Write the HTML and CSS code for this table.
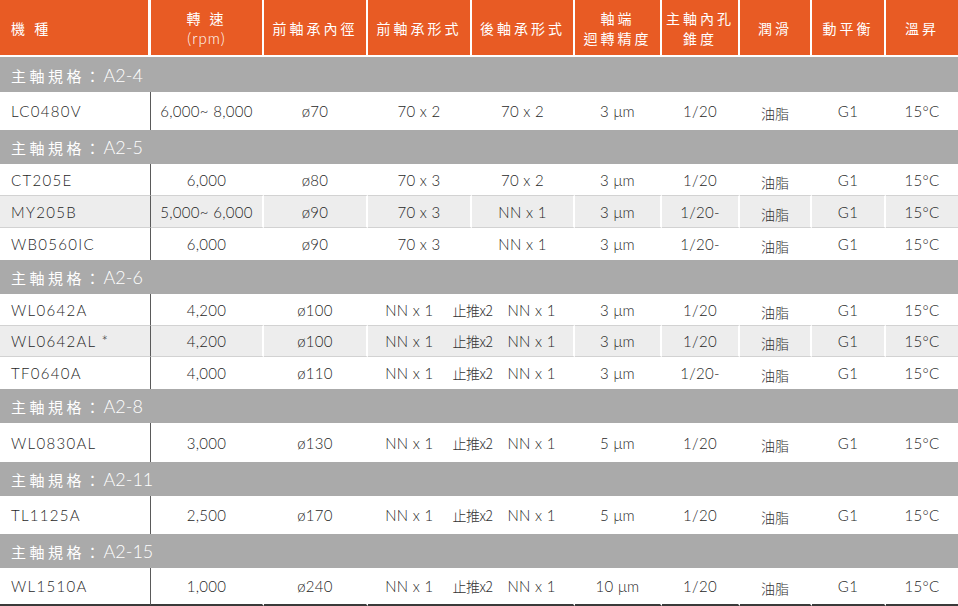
FILE: index.html
```html
<!DOCTYPE html>
<html lang="zh-Hant">
<head>
<meta charset="utf-8">
<title>主軸規格</title>
<link rel="stylesheet" href="styles.css">
</head>
<body>
<table class="spec">
  <colgroup>
    <col class="c1"><col class="c2"><col class="c3"><col class="c4"><col class="c5">
    <col class="c6"><col class="c7"><col class="c8"><col class="c9"><col class="c10">
  </colgroup>
  <thead>
    <tr>
      <th class="model">機 種</th>
      <th>轉 速<br><span class="rpm">(rpm)</span></th>
      <th>前軸承內徑</th>
      <th>前軸承形式</th>
      <th>後軸承形式</th>
      <th>軸端<br>迴轉精度</th>
      <th>主軸內孔<br>錐度</th>
      <th>潤滑</th>
      <th>動平衡</th>
      <th class="last">溫昇</th>
    </tr>
  </thead>
  <tbody>
    <tr class="grp first"><td colspan="10">主軸規格：<span class="code">A2-4</span></td></tr>
    <tr class="h38 end">
      <td class="model">LC0480V</td><td>6,000~ 8,000</td><td>ø70</td><td>70 x 2</td><td>70 x 2</td>
      <td>3 μm</td><td>1/20</td><td class="cjk">油脂</td><td>G1</td><td>15°C</td>
    </tr>

    <tr class="grp"><td colspan="10">主軸規格：<span class="code">A2-5</span></td></tr>
    <tr class="h32">
      <td class="model">CT205E</td><td>6,000</td><td>ø80</td><td>70 x 3</td><td>70 x 2</td>
      <td>3 μm</td><td>1/20</td><td class="cjk">油脂</td><td>G1</td><td>15°C</td>
    </tr>
    <tr class="h32 alt">
      <td class="model">MY205B</td><td>5,000~ 6,000</td><td>ø90</td><td>70 x 3</td><td>NN x 1</td>
      <td>3 μm</td><td>1/20-</td><td class="cjk">油脂</td><td>G1</td><td>15°C</td>
    </tr>
    <tr class="h32 end">
      <td class="model">WB0560IC</td><td>6,000</td><td>ø90</td><td>70 x 3</td><td>NN x 1</td>
      <td>3 μm</td><td>1/20-</td><td class="cjk">油脂</td><td>G1</td><td>15°C</td>
    </tr>

    <tr class="grp"><td colspan="10">主軸規格：<span class="code">A2-6</span></td></tr>
    <tr class="h32">
      <td class="model">WL0642A</td><td>4,200</td><td>ø100</td>
      <td colspan="2" class="split"><span>NN x 1</span><span class="thrust">止推x2</span><span>NN x 1</span></td>
      <td>3 μm</td><td>1/20</td><td class="cjk">油脂</td><td>G1</td><td>15°C</td>
    </tr>
    <tr class="h31 alt">
      <td class="model">WL0642AL *</td><td>4,200</td><td>ø100</td>
      <td colspan="2" class="split"><span>NN x 1</span><span class="thrust">止推x2</span><span>NN x 1</span></td>
      <td>3 μm</td><td>1/20</td><td class="cjk">油脂</td><td>G1</td><td>15°C</td>
    </tr>
    <tr class="h32 end">
      <td class="model">TF0640A</td><td>4,000</td><td>ø110</td>
      <td colspan="2" class="split"><span>NN x 1</span><span class="thrust">止推x2</span><span>NN x 1</span></td>
      <td>3 μm</td><td>1/20-</td><td class="cjk">油脂</td><td>G1</td><td>15°C</td>
    </tr>

    <tr class="grp"><td colspan="10">主軸規格：<span class="code">A2-8</span></td></tr>
    <tr class="h39 end">
      <td class="model">WL0830AL</td><td>3,000</td><td>ø130</td>
      <td colspan="2" class="split"><span>NN x 1</span><span class="thrust">止推x2</span><span>NN x 1</span></td>
      <td>5 μm</td><td>1/20</td><td class="cjk">油脂</td><td>G1</td><td>15°C</td>
    </tr>

    <tr class="grp"><td colspan="10">主軸規格：<span class="code">A2-11</span></td></tr>
    <tr class="h38 end">
      <td class="model">TL1125A</td><td>2,500</td><td>ø170</td>
      <td colspan="2" class="split"><span>NN x 1</span><span class="thrust">止推x2</span><span>NN x 1</span></td>
      <td>5 μm</td><td>1/20</td><td class="cjk">油脂</td><td>G1</td><td>15°C</td>
    </tr>

    <tr class="grp"><td colspan="10">主軸規格：<span class="code">A2-15</span></td></tr>
    <tr class="h38 end final">
      <td class="model">WL1510A</td><td>1,000</td><td>ø240</td>
      <td colspan="2" class="split"><span>NN x 1</span><span class="thrust">止推x2</span><span>NN x 1</span></td>
      <td>10 μm</td><td>1/20</td><td class="cjk">油脂</td><td>G1</td><td>15°C</td>
    </tr>
  </tbody>
</table>
</body>
</html>
```

FILE: styles.css
```css
html, body {
  margin: 0;
  padding: 0;
  background: #ffffff;
}

.spec {
  width: 958px;
  table-layout: fixed;
  border-collapse: separate;
  border-spacing: 0;
  font-family: "Lato", "Noto Sans CJK TC", sans-serif;
  font-weight: 300;
  font-size: 15px;
  color: #1f1f1f;
}

.c1 { width: 151px; }
.c2 { width: 113px; }
.c3 { width: 104px; }
.c4 { width: 104px; }
.c5 { width: 103px; }
.c6 { width: 87px; }
.c7 { width: 78px; }
.c8 { width: 72px; }
.c9 { width: 74px; }
.c10 { width: 72px; }

.spec th {
  height: 55px;
  padding: 0;
  background: #e85b24;
  color: #ffffff;
  font-family: "Noto Sans CJK TC", sans-serif;
  font-weight: normal;
  font-size: 14px;
  line-height: 20px;
  letter-spacing: 3px;
  text-align: center;
  vertical-align: middle;
  border-right: 2px solid #ffffff;
  border-bottom: 2px solid #ffffff;
}

.spec th.model {
  text-align: left;
  padding-left: 11px;
  border-right-width: 3px;
}

.spec th.last {
  border-right: 0;
}

.rpm {
  font-family: "Lato", sans-serif;
  font-weight: 300;
  font-size: 15px;
  letter-spacing: 1px;
}

.spec td {
  padding: 0;
  text-align: center;
  vertical-align: middle;
  white-space: nowrap;
  border-right: 2px solid #ffffff;
  letter-spacing: 0.3px;
}

.spec td:last-child {
  border-right: 0;
}

.spec td.model {
  text-align: left;
  padding-left: 11px;
  letter-spacing: 1.3px;
  border-right: 1px solid #5a5a5a;
}

.spec td.cjk {
  font-family: "Noto Sans CJK TC", sans-serif;
  font-weight: 300;
  font-size: 14px;
  padding-top: 4px;
  letter-spacing: 0;
  color: #333333;
}

.split span {
  display: inline-block;
}

.split .thrust {
  margin: 0 15px 0 19px;
  font-family: "Noto Sans CJK TC", sans-serif;
  font-weight: 300;
  font-size: 14px;
  letter-spacing: -0.5px;
  color: #333333;
}

.h31 { height: 31px; }
.h32 { height: 32px; }
.h36 { height: 36px; }
.h38 { height: 38px; }
.h39 { height: 39px; }

.spec tr.h32:not(.end) td,
.spec tr.alt td {
  border-bottom: 1px solid #d2d2d2;
}

.spec tr.alt td {
  background: #ededed;
}

.spec tr.final td {
  border-bottom: 2px solid #3a3a3a;
}

.spec tr.grp td {
  height: 34px;
  background: #aaaaaa;
  color: #ffffff;
  text-align: left;
  padding-left: 11px;
  font-family: "Noto Sans CJK TC", sans-serif;
  font-weight: normal;
  font-size: 15px;
  letter-spacing: 3.5px;
  border-right: 0;
}

.spec tr.grp.first td {
  height: 35px;
}

.spec tr.grp .code {
  font-family: "Lato", sans-serif;
  font-weight: 300;
  font-size: 18px;
  letter-spacing: 0;
  margin-left: 0;
}
```
